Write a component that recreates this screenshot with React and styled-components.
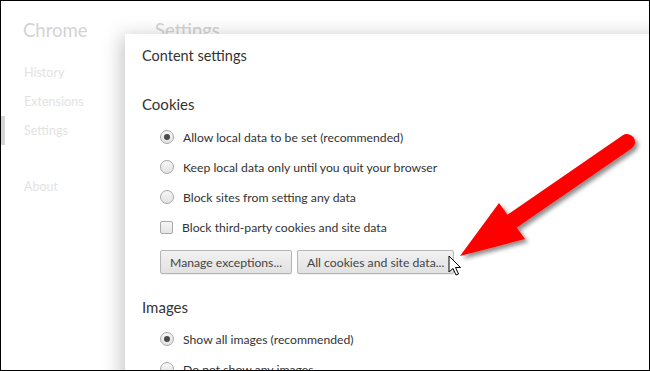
import React from "react";
import styled, { createGlobalStyle } from "styled-components";

const GlobalStyle = createGlobalStyle`
  html, body {
    margin: 0;
    padding: 0;
    background: #fff;
  }
  body {
    font-family: "Lato", "Liberation Sans", sans-serif;
  }
`;

const Frame = styled.div`
  position: relative;
  width: 650px;
  height: 371px;
  box-sizing: border-box;
  border: 1px solid #000;
  overflow: hidden;
  background: #fff;
  display: flex;
`;

const Sidebar = styled.nav`
  width: 153px;
  display: flex;
  flex-direction: column;
`;

const Brand = styled.div`
  padding: 17px 0 0 22px;
  height: 24px;
  font-size: 18.5px;
  line-height: 24px;
  color: #d3d3d3;
`;

const NavList = styled.ul`
  list-style: none;
  margin: 16px 0 0;
  padding: 0;
`;

const NavItem = styled.li`
  position: relative;
  height: 29px;
  line-height: 29px;
  padding-left: 23px;
  font-size: 12.5px;
  color: #e3e3e3;
  margin-top: ${(p) => (p.$gap ? "27px" : "0")};
  &::before {
    content: "";
    display: ${(p) => (p.$active ? "block" : "none")};
    position: absolute;
    left: 0;
    top: 0;
    width: 4px;
    height: 29px;
    background: #d6d6d6;
  }
`;

const Main = styled.main`
  flex: 1;
`;

const PageTitle = styled.h1`
  margin: 0;
  padding: 17px 0 0 1px;
  font-size: 18.5px;
  line-height: 24px;
  font-weight: normal;
  color: #d3d3d3;
`;

const Dialog = styled.section`
  position: absolute;
  left: 124px;
  top: 33px;
  width: 560px;
  height: 400px;
  background: #fff;
  box-shadow: -4px 2px 18px rgba(0, 0, 0, 0.22);
  padding: 12px 0 0 17px;
  box-sizing: border-box;
  color: #333;
`;

const DialogTitle = styled.h2`
  margin: 0;
  font-size: 14.5px;
  line-height: 20px;
  font-weight: normal;
  color: #333;
`;

const SectionTitle = styled.h3`
  margin: ${(p) => p.$top} 0 0;
  font-size: 15px;
  line-height: 20px;
  font-weight: normal;
  color: #333;
`;

const Options = styled.div`
  margin: ${(p) => p.$top} 0 0 18px;
  display: flex;
  flex-direction: column;
`;

const Row = styled.label`
  height: 30px;
  display: flex;
  align-items: center;
  gap: 9px;
  font-size: 12.2px;
  color: #333;
`;

const Radio = styled.span`
  width: 14px;
  height: 14px;
  box-sizing: border-box;
  border-radius: 50%;
  border: 1px solid #a9a9a9;
  background: linear-gradient(#f6f6f6, #e2e2e2);
  display: flex;
  align-items: center;
  justify-content: center;
  &::after {
    content: "";
    display: ${(p) => (p.$checked ? "block" : "none")};
    width: 6px;
    height: 6px;
    border-radius: 50%;
    background: #4a4a4a;
  }
`;

const Checkbox = styled.span`
  width: 13px;
  height: 13px;
  box-sizing: border-box;
  border-radius: 2px;
  border: 1px solid #a9a9a9;
  background: linear-gradient(#f6f6f6, #e4e4e4);
`;

const ButtonRow = styled.div`
  display: flex;
  gap: 5px;
  margin-top: 8px;
`;

const Button = styled.button`
  height: 24px;
  padding: 0 9px;
  border: 1px solid #b5b5b5;
  border-radius: 2px;
  background: linear-gradient(#f2f2f2, #e1e1e1);
  font-family: inherit;
  font-size: 12.2px;
  color: #444;
  box-shadow: 0 1px 0 rgba(0, 0, 0, 0.06);
`;

const Overlay = styled.svg`
  position: absolute;
  left: -1px;
  top: -1px;
  pointer-events: none;
`;

const cookieOptions = [
  { label: "Allow local data to be set (recommended)", checked: true },
  { label: "Keep local data only until you quit your browser" },
  { label: "Block sites from setting any data" },
];

export default function App() {
  return (
    <>
      <GlobalStyle />
      <Frame>
        <Sidebar>
          <Brand>Chrome</Brand>
          <NavList>
            <NavItem>History</NavItem>
            <NavItem>Extensions</NavItem>
            <NavItem $active>Settings</NavItem>
            <NavItem $gap>About</NavItem>
          </NavList>
        </Sidebar>
        <Main>
          <PageTitle>Settings</PageTitle>
        </Main>

        <Dialog>
          <DialogTitle>Content settings</DialogTitle>
          <SectionTitle $top="28px">Cookies</SectionTitle>
          <Options $top="8px">
            {cookieOptions.map((o) => (
              <Row key={o.label}>
                <Radio $checked={o.checked} />
                {o.label}
              </Row>
            ))}
            <Row>
              <Checkbox />
              Block third-party cookies and site data
            </Row>
            <ButtonRow>
              <Button>Manage exceptions...</Button>
              <Button>All cookies and site data...</Button>
            </ButtonRow>
          </Options>
          <SectionTitle $top="23px">Images</SectionTitle>
          <Options $top="7px">
            <Row>
              <Radio $checked />
              Show all images (recommended)
            </Row>
            <Row>
              <Radio />
              Do not show any images
            </Row>
          </Options>
        </Dialog>

        <Overlay width="650" height="371" viewBox="0 0 650 371">
          <defs>
            <filter id="shadow" x="-20%" y="-20%" width="140%" height="140%">
              <feDropShadow dx="3" dy="3" stdDeviation="2" floodColor="#000" floodOpacity="0.45" />
            </filter>
          </defs>
          <g filter="url(#shadow)">
            <line x1="627" y1="142" x2="508" y2="224" stroke="#ff0000" strokeWidth="16" strokeLinecap="round" />
            <polygon points="460,256 499,203 525,239" fill="#ff0000" />
          </g>
          <path
            d="M449 256 L449 272 L453 268.5 L456 275 L458.5 274 L455.5 267.5 L460.5 267.5 Z"
            fill="#fff"
            stroke="#000"
            strokeWidth="1"
            strokeLinejoin="round"
          />
        </Overlay>
      </Frame>
    </>
  );
}
